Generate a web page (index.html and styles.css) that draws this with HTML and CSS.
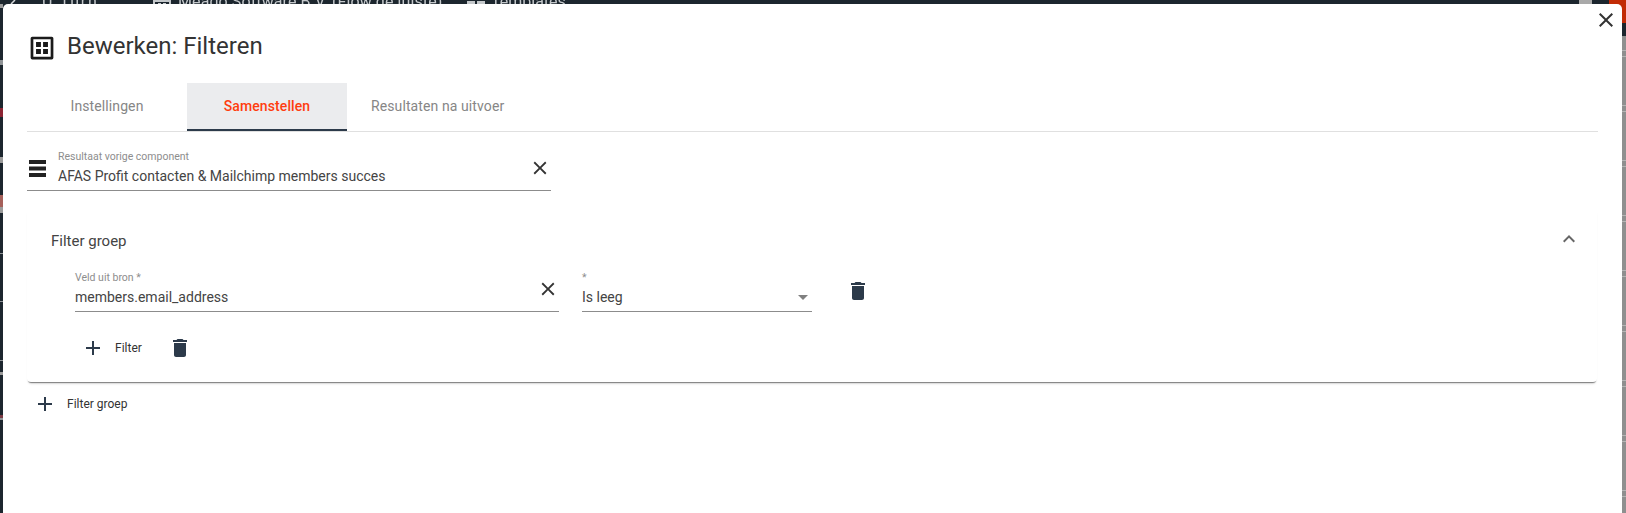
FILE: index.html
```html
<!DOCTYPE html>
<html lang="nl">
<head>
    <meta charset="UTF-8">
    <title>Bewerken: Filteren</title>
    <link rel="stylesheet" href="styles.css">
</head>
<body>
    <div class="backdrop">
        <svg class="topbar-check" viewBox="0 0 10 4" width="10" height="4"><path d="M2 4 6 0" /></svg>
        <span class="topbar-item topbar-turn">U Turn</span>
        <svg class="topbar-icon topbar-icon-org" viewBox="0 0 18 4" width="18" height="4"><path d="M0 0h18v4h-2V2H2v2H0zM5 3h3v1H5zM10 3h3v1h-3z"/></svg>
        <span class="topbar-item topbar-org">Meago Software B.V. (Flow de juiste)</span>
        <svg class="topbar-icon topbar-icon-tpl" viewBox="0 0 18 4" width="18" height="4"><path d="M0 1h8v3H0zM10 1h8v3h-8z"/></svg>
        <span class="topbar-item topbar-tpl">Templates</span>
        <div class="top-mark-grey"></div>
        <div class="top-mark-red"></div>
        <div class="left-strip"></div>
        <div class="right-strip"></div>
    </div>

    <div class="dialog">
        <button class="close-btn" aria-label="Sluiten">
            <svg viewBox="0 0 24 24" width="24" height="24"><path d="M19 6.410 17.590 5 12 10.590 6.410 5 5 6.410 10.590 12 5 17.590 6.410 19 12 13.410 17.590 19 19 17.590 13.410 12z"/></svg>
        </button>

        <div class="dialog-title">
            <svg class="title-icon" viewBox="0 0 24 24" width="26" height="26">
                <path fill-rule="evenodd" d="M3 1.500h18A1.500 1.500 0 0 1 22.500 3v18a1.500 1.500 0 0 1-1.500 1.500H3A1.500 1.500 0 0 1 1.500 21V3A1.500 1.500 0 0 1 3 1.500zm1 2.500v16h16V4z"/>
                <path d="M6.500 6.500h4.500v4.500H6.500zM13 6.500h4.500v4.500H13zM6.500 13h4.500v4.500H6.500zM13 13h4.500v4.500H13z"/>
            </svg>
            <h1>Bewerken: Filteren</h1>
        </div>

        <div class="tabs">
            <div class="tab">Instellingen</div>
            <div class="tab tab-active">Samenstellen</div>
            <div class="tab">Resultaten na uitvoer</div>
        </div>

        <div class="source-row">
            <svg class="source-icon" viewBox="0 0 18 18" width="18" height="18"><path d="M0 0h17v4H0zM0 6.500h17v4H0zM0 13h17v4H0z"/></svg>
            <div class="field source-field">
                <label>Resultaat vorige component</label>
                <div class="field-value">AFAS Profit contacten &amp; Mailchimp members succes</div>
                <svg class="field-clear" viewBox="0 0 24 24" width="22" height="22"><path d="M19 6.410 17.590 5 12 10.590 6.410 5 5 6.410 10.590 12 5 17.590 6.410 19 12 13.410 17.590 19 19 17.590 13.410 12z"/></svg>
            </div>
        </div>

        <div class="group-card">
            <div class="group-head">
                <span>Filter groep</span>
                <svg class="group-chevron" viewBox="0 0 24 24" width="24" height="24"><path d="M12 8l-6 6 1.410 1.410L12 10.830l4.590 4.580L18 14z"/></svg>
            </div>
            <div class="filter-row">
                <div class="field bron-field">
                    <label>Veld uit bron *</label>
                    <div class="field-value">members.email_address</div>
                    <svg class="field-clear" viewBox="0 0 24 24" width="22" height="22"><path d="M19 6.410 17.590 5 12 10.590 6.410 5 5 6.410 10.590 12 5 17.590 6.410 19 12 13.410 17.590 19 19 17.590 13.410 12z"/></svg>
                </div>
                <div class="field op-field">
                    <label>*</label>
                    <div class="field-value">Is leeg</div>
                    <span class="select-arrow"></span>
                </div>
                <svg class="trash" viewBox="0 0 24 24" width="24" height="24"><path d="M6 19c0 1.100.9 2 2 2h8c1.100 0 2-.9 2-2V7H6zM19 4h-3.500l-1-1h-5l-1 1H5v2h14z"/></svg>
            </div>
            <div class="group-actions">
                <button class="add-btn">
                    <svg viewBox="0 0 24 24" width="24" height="24"><path d="M19 13h-6v6h-2v-6H5v-2h6V5h2v6h6z"/></svg>
                    <span>Filter</span>
                </button>
                <svg class="trash" viewBox="0 0 24 24" width="24" height="24"><path d="M6 19c0 1.100.9 2 2 2h8c1.100 0 2-.9 2-2V7H6zM19 4h-3.500l-1-1h-5l-1 1H5v2h14z"/></svg>
            </div>
        </div>

        <button class="add-btn add-group">
            <svg viewBox="0 0 24 24" width="24" height="24"><path d="M19 13h-6v6h-2v-6H5v-2h6V5h2v6h6z"/></svg>
            <span>Filter groep</span>
        </button>
    </div>
</body>
</html>
```

FILE: styles.css
```css
* {
    box-sizing: border-box;
}

html, body {
    height: 100%;
}

body {
    margin: 0;
    overflow: hidden;
    background-color: #1c262e;
    font-family: Roboto, sans-serif;
    color: #333;
}

/* what is left visible of the page behind the dialog */
.backdrop {
    position: fixed;
    inset: 0;
    overflow: hidden;
}

.topbar-item {
    position: absolute;
    top: -6px;
    font-size: 16px;
    line-height: 16px;
    color: #c4c8cb;
    white-space: nowrap;
}

.topbar-turn { left: 42px; letter-spacing: 1.800px; }
.topbar-org { left: 178px; letter-spacing: 0.1px; }
.topbar-tpl { left: 491px; }

.topbar-check {
    position: absolute;
    top: 0;
    left: 9px;
    stroke: #d5d8da;
    stroke-width: 1.500;
    fill: none;
}

.topbar-icon {
    position: absolute;
    top: 0;
    fill: #c4c8cb;
}

.topbar-icon-org { left: 153px; }
.topbar-icon-tpl { left: 467px; }

.top-mark-grey {
    position: absolute;
    top: 0;
    left: 1579px;
    width: 13px;
    height: 4px;
    background-color: #a9a9a9;
}

.top-mark-red {
    position: absolute;
    top: 0;
    right: 0;
    width: 17px;
    height: 23px;
    background-color: #c22b06;
}

.left-strip {
    position: absolute;
    top: 0;
    left: 0;
    bottom: 0;
    width: 3px;
    background: linear-gradient(#1c262e 0 4px, #9a9a9a 4px 8px, #1c262e 8px 60px,
        #8f9396 60px 65px, #1c262e 65px 108px, #8c2433 108px 117px, #1c262e 117px 157px,
        #9a9a9a 157px 163px, #1c262e 163px 195px, #a5605a 195px 207px, #9a9a9a 207px 213px,
        #1c262e 213px 253px, #8f9396 253px 254px, #1c262e 254px 301px, #8f9396 301px 302px,
        #1c262e 302px 360px, #8f9396 360px 361px, #1c262e 361px 372px, #9a9a9a 372px 375px,
        #1c262e 375px 415px, #7a3a44 415px 418px, #8f9396 418px 420px, #1c262e 420px);
}

.right-strip {
    position: absolute;
    top: 36px;
    right: 0;
    bottom: 0;
    width: 4px;
    background: repeating-linear-gradient(#8f8f8f 0 14px, #b5b5b5 14px 15px, #8f8f8f 15px 20px, #b5b5b5 20px 21px, #8f8f8f 21px 55px);
}

.dialog {
    position: absolute;
    top: 4px;
    left: 3px;
    right: 4px;
    bottom: 0;
    padding: 0 24px;
    background-color: #fff;
    border-radius: 5px 5px 0 0;
}

.close-btn {
    position: absolute;
    top: 4px;
    right: 3px;
    width: 26px;
    height: 24px;
    padding: 0;
    border: none;
    background: none;
    fill: #333;
}

.dialog-title {
    display: flex;
    align-items: center;
    gap: 12px;
    height: 32px;
    margin-top: 26px;
    padding-left: 2px;
}

.title-icon {
    margin-top: 4px;
    fill: #1b1b1b;
}

.dialog-title h1 {
    margin: 0;
    font-size: 24px;
    font-weight: 400;
    color: #333;
}

.tabs {
    display: flex;
    height: 49px;
    margin-top: 21px;
    border-bottom: 1px solid #e0e0e0;
}

.tab {
    min-width: 160px;
    height: 48px;
    padding: 0 24px;
    font-size: 14px;
    letter-spacing: 0.1px;
    line-height: 46px;
    text-align: center;
    color: #868686;
}

.tab-active {
    background-color: #ebecee;
    border-bottom: 2px solid #2c3a4a;
    color: #ff3d0f;
    font-weight: 500;
}

.source-row {
    display: flex;
    width: 524px;
    margin-top: 19px;
    border-bottom: 1px solid #8c8c8c;
}

.source-icon {
    margin: 9px 0 0 2px;
    fill: #222;
}

.field {
    position: relative;
    height: 39px;
}

.field label {
    display: block;
    height: 12px;
    font-size: 10.500px;
    line-height: 12px;
    color: #8d8d8d;
}

.field-value {
    margin-top: 4px;
    font-size: 14px;
    line-height: 18px;
    color: #444;
}

.field-clear {
    position: absolute;
    top: 6px;
    right: 0;
    fill: #333;
}

.source-field {
    flex: 1;
    margin-left: 11px;
}

.group-card {
    position: relative;
    height: 174px;
    margin: 17px 1px 0 0;
    padding: 0 24px;
    border-radius: 4px;
    box-shadow: 0 2px 1px -1px rgba(0,0,0,0.4), 0 3px 3px -2px rgba(0,0,0,0.25);
}

.group-head {
    display: flex;
    align-items: center;
    justify-content: space-between;
    height: 64px;
    padding-top: 2px;
    font-size: 15px;
    color: #444;
}

.group-chevron {
    margin: 0 -8px 4px 0;
    fill: #666;
}

.filter-row {
    display: flex;
    gap: 23px;
    padding-left: 24px;
}

.bron-field, .op-field {
    height: 40px;
    border-bottom: 1px solid #8c8c8c;
}

.bron-field {
    width: 484px;
}

.op-field {
    width: 230px;
}

.select-arrow {
    position: absolute;
    right: 4px;
    top: 23px;
    border-top: 5px solid #808080;
    border-left: 5px solid transparent;
    border-right: 5px solid transparent;
}

.trash {
    fill: #2c3a4a;
}

.filter-row .trash {
    margin: 7px 0 0 11px;
}

.group-actions {
    display: flex;
    align-items: center;
    gap: 20px;
    margin-top: 18px;
    padding-left: 24px;
}

.add-btn {
    display: flex;
    align-items: center;
    gap: 10px;
    height: 36px;
    padding: 0 6px;
    border: none;
    background: none;
    font-family: inherit;
    font-size: 12px;
    color: #333;
}

.add-btn svg {
    fill: #2c3a4a;
}

.add-group {
    margin-top: 4px;
}
```
